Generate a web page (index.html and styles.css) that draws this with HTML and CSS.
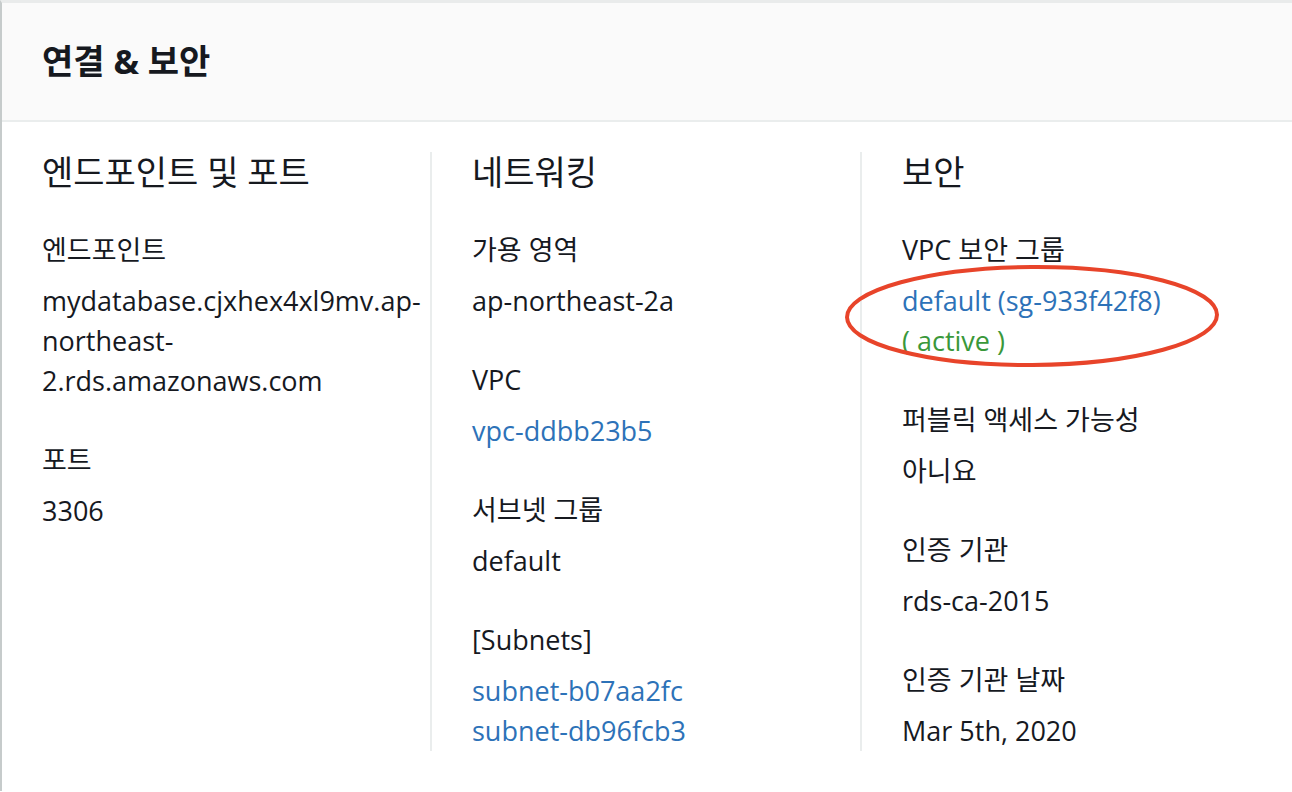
FILE: index.html
```html
<!DOCTYPE html>
<html lang="ko">
<head>
<meta charset="utf-8">
<title>연결 &amp; 보안</title>
<link rel="stylesheet" href="styles.css">
</head>
<body>
<section class="panel">
  <header class="panel-header">
    <h2 class="panel-title">연결 &amp; 보안</h2>
  </header>
  <div class="panel-body">
    <div class="col">
      <h3 class="col-title">엔드포인트 및 포트</h3>
      <div class="kv">
        <div class="k">엔드포인트</div>
        <div class="v">mydatabase.cjxhex4xl9mv.ap-northeast-2.rds.amazonaws.com</div>
      </div>
      <div class="kv">
        <div class="k">포트</div>
        <div class="v">3306</div>
      </div>
    </div>
    <div class="col col-sep">
      <h3 class="col-title">네트워킹</h3>
      <div class="kv">
        <div class="k">가용 영역</div>
        <div class="v">ap-northeast-2a</div>
      </div>
      <div class="kv">
        <div class="k">VPC</div>
        <div class="v"><a class="link" href="#">vpc-ddbb23b5</a></div>
      </div>
      <div class="kv">
        <div class="k">서브넷 그룹</div>
        <div class="v">default</div>
      </div>
      <div class="kv">
        <div class="k">[Subnets]</div>
        <div class="v"><a class="link" href="#">subnet-b07aa2fc</a><br><a class="link" href="#">subnet-db96fcb3</a></div>
      </div>
    </div>
    <div class="col col-sep">
      <h3 class="col-title">보안</h3>
      <div class="kv">
        <div class="k">VPC 보안 그룹</div>
        <div class="v"><a class="link" href="#">default (sg-933f42f8)</a><br><span class="status">( active )</span></div>
      </div>
      <div class="kv">
        <div class="k">퍼블릭 액세스 가능성</div>
        <div class="v">아니요</div>
      </div>
      <div class="kv">
        <div class="k">인증 기관</div>
        <div class="v">rds-ca-2015</div>
      </div>
      <div class="kv">
        <div class="k">인증 기관 날짜</div>
        <div class="v">Mar 5th, 2020</div>
      </div>
    </div>
  </div>
  <svg class="highlight" width="400" height="120" viewBox="0 0 400 120" aria-hidden="true">
    <ellipse cx="200" cy="60" rx="185" ry="49" fill="none" stroke="#e8442a" stroke-width="4" transform="rotate(-0.4 200 60)"/>
  </svg>
</section>
</body>
</html>
```

FILE: styles.css
```css
html, body {
  margin: 0;
  padding: 0;
  background: #ffffff;
}

body {
  font-family: "Open Sans", "Noto Sans CJK KR", sans-serif;
  color: #16191f;
}

.panel {
  position: relative;
  border-top: 3px solid #e9ebeb;
  border-left: 2px solid #c6cbcb;
  min-height: 789px;
  box-sizing: border-box;
}

.panel-header {
  background: #fafafa;
  border-bottom: 2px solid #eaeded;
  height: 117px;
  box-sizing: content-box;
  display: flex;
  align-items: center;
  padding: 0 40px;
}

.panel-title {
  margin: 0;
  font-size: 34px;
  font-weight: 700;
  line-height: 40px;
  padding-bottom: 2px;
}

.panel-body {
  display: grid;
  grid-template-columns: 428px 430px 1fr;
  align-items: start;
  padding: 30px 0 40px;
}

.col {
  padding-left: 40px;
  padding-right: 0;
}

.col-sep {
  border-left: 2px solid #eaeded;
}

.col-title {
  margin: 0 0 38px;
  font-size: 34px;
  font-weight: 400;
  line-height: 40px;
}

.kv + .kv {
  margin-top: 39px;
}

.k {
  font-size: 27px;
  line-height: 40px;
  margin-bottom: 11px;
}

.v {
  font-size: 27px;
  line-height: 40px;
  overflow-wrap: break-word;
}

.link {
  color: #2d72b8;
  text-decoration: none;
}

.status {
  color: #3a983a;
}

.highlight {
  position: absolute;
  left: 830px;
  top: 253px;
  pointer-events: none;
}
```
